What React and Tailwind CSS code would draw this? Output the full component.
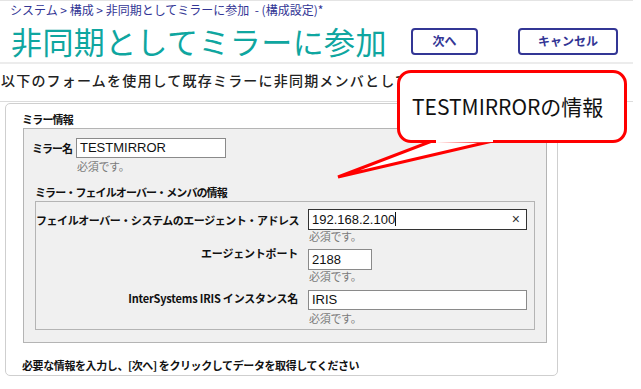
import React from "react";

const jp = "font-['Noto_Sans_CJK_JP','Noto_Sans',sans-serif]";
const lat = "font-['Liberation_Sans','Noto_Sans_CJK_JP',sans-serif]";

function Req() {
  return (
    <div className={`${jp} text-[11px] leading-[13px] text-[#7a7a7a] pl-[1px] tracking-[-0.3px]`}>必須です。</div>
  );
}

export default function App() {
  return (
    <div className={`relative w-[641px] h-[389px] overflow-hidden bg-white ${jp}`}>
      <div className="w-[633px] border-t border-[#e4e4e4]">
        <div className="pl-[10px] pt-[2px] text-[12px] leading-[14px] text-[#333695] whitespace-nowrap">
          システム &gt; 構成 &gt; 非同期としてミラーに参加&nbsp;&nbsp;- (構成設定)*
        </div>
        <div className="flex items-center h-[40px] mt-[4px]">
          <div className="w-[411px] pl-[11px] text-[31px] leading-[36px] tracking-[0.4px] text-[#0fa6a0] whitespace-nowrap">
            非同期としてミラーに参加
          </div>
          <button className="w-[67px] h-[27px] border-2 border-[#333695] rounded-[4px] text-[12px] font-bold text-[#333695] flex items-center justify-center">
            次へ
          </button>
          <button className="ml-[40px] w-[100px] h-[27px] border-2 border-[#333695] rounded-[4px] text-[12px] font-bold text-[#333695] flex items-center justify-center">
            キャンセル
          </button>
        </div>
        <div className="h-[2px] bg-[#ececec] mt-[1px]"></div>
        <div className="h-[38px] border-b border-[#dcdcdc] pt-[6px] pl-[1px] text-[14px] leading-[20px] tracking-[1.2px] font-medium text-[#222] whitespace-nowrap overflow-hidden">
          以下のフォームを使用して既存ミラーに非同期メンバとして参加します
        </div>
      </div>

      <div className="ml-[5px] mt-[1px] w-[553px] h-[273px] border border-[#cfcfcf] rounded-[5px] bg-white">
        <div className="pl-[16px] pt-[8px] text-[11px] leading-[14px] font-bold tracking-[-0.8px] text-[#111]">ミラー情報</div>
        <div className="ml-[17px] mt-[2px] w-[524px] h-[215px] border border-[#b4b4b4] bg-[#f0f0f0]">
          <div className="flex pt-[9px] pl-[8px]">
            <div className="w-[44px] pt-[3px] text-[11px] leading-[14px] font-bold tracking-[-1px] text-[#111]">ミラー名</div>
            <div>
              <div className={`w-[150px] h-[20px] border border-[#8a8a8a] bg-white pl-[3px] text-[13px] leading-[18px] text-[#111] ${lat}`}>TESTMIRROR</div>
              <div className="mt-[2px]"><Req /></div>
            </div>
          </div>
          <div className="pl-[11px] mt-[12px] text-[11px] leading-[14px] font-bold tracking-[-0.9px] text-[#111] whitespace-nowrap">ミラー・フェイルオーバー・メンバの情報</div>
          <div className="ml-[11px] mt-[2px] w-[500px] h-[129px] border border-[#b4b4b4] bg-[#f0f0f0] pt-[7px]">
            <div className="flex">
              <div className="w-[262px] pt-[4px] text-right text-[11px] leading-[14px] font-bold tracking-[-0.45px] text-[#111] whitespace-nowrap">フェイルオーバー・システムのエージェント・アドレス</div>
              <div className="ml-[10px]">
                <div className={`relative w-[219px] h-[21px] border border-[#333] bg-white pl-[3px] text-[13px] leading-[19px] text-[#111] ${lat}`}>
                  192.168.2.100<span className="inline-block w-px h-[14px] bg-[#111] align-[-2px]"></span>
                  <span className="absolute right-[6px] top-0 text-[14px] leading-[19px] text-[#333]">×</span>
                </div>
                <Req />
              </div>
            </div>
            <div className="flex mt-[6px]">
              <div className="w-[262px] -mt-[3px] text-right text-[11px] leading-[14px] font-bold tracking-[-0.2px] text-[#111] whitespace-nowrap">エージェントポート</div>
              <div className="ml-[10px]">
                <div className={`w-[64px] h-[21px] border border-[#8a8a8a] bg-white pl-[3px] text-[13px] leading-[19px] text-[#111] ${lat}`}>2188</div>
                <Req />
              </div>
            </div>
            <div className="flex mt-[7px]">
              <div className="w-[262px] pt-[1px] text-right text-[11px] leading-[14px] font-bold tracking-[-0.2px] text-[#111] whitespace-nowrap">InterSystems IRIS インスタンス名</div>
              <div className="ml-[10px]">
                <div className={`w-[219px] h-[20px] border border-[#8a8a8a] bg-white pl-[3px] text-[13px] leading-[18px] text-[#111] ${lat}`}>IRIS</div>
                <div className="mt-[2px]"><Req /></div>
              </div>
            </div>
          </div>
        </div>
        <div className="pl-[16px] mt-[15px] text-[11px] leading-[14px] font-bold tracking-[-0.4px] text-[#111] whitespace-nowrap">
          必要な情報を入力し、[次へ] をクリックしてデータを取得してください
        </div>
      </div>

      <svg className="absolute left-0 top-0 pointer-events-none" width="641" height="389">
        <polygon points="432,141 497,140 338,177" fill="white" stroke="#ff0000" strokeWidth="3" strokeLinejoin="miter" />
      </svg>
      <div className="absolute left-[397px] top-[70px] w-[230px] h-[73px] border-[3px] border-[#ff0000] rounded-[14px] bg-white pl-[12px] pt-[19px] text-[21px] leading-[28px] text-[#111] font-['Noto_Sans_CJK_JP','Noto_Sans',sans-serif] whitespace-nowrap">
        TESTMIRRORの情報
      </div>
      <svg className="absolute left-0 top-0 pointer-events-none" width="641" height="389">
        <polygon points="434,139 495,138 440,142" fill="white" />
        <line x1="436" y1="141.5" x2="493" y2="140.5" stroke="white" strokeWidth="3" />
      </svg>
    </div>
  );
}
